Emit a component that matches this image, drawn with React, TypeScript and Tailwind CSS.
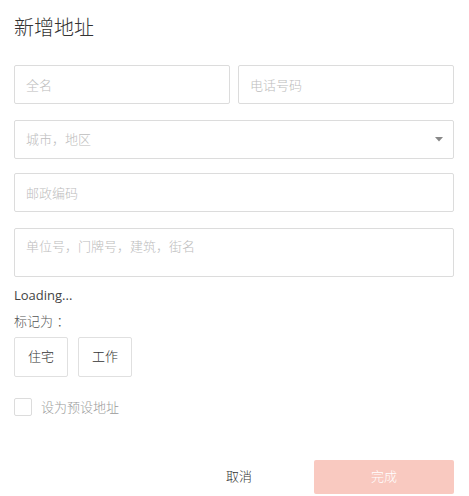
export default function App() {
  return (
    <div
      className="min-h-screen bg-white pl-[14px] pr-[15px] pt-[14px] text-[13px] font-light text-[#333]"
      style={{ fontFamily: '"Open Sans", "Noto Sans CJK SC", sans-serif' }}
    >
      {/* Title */}
      <h1 className="text-[20px] font-light leading-[28px] text-[#333]">新增地址</h1>

      {/* Name + phone */}
      <div className="mt-[23px] flex gap-[8px]">
        <input
          placeholder="全名"
          className="h-[39px] w-[216px] rounded-[2px] border border-[#dcdcdc] px-[11px] text-[13px] outline-none placeholder:text-[#bdbdbd]"
        />
        <input
          placeholder="电话号码"
          className="h-[39px] w-[216px] rounded-[2px] border border-[#dcdcdc] px-[11px] text-[13px] outline-none placeholder:text-[#bdbdbd]"
        />
      </div>

      {/* City select */}
      <div className="mt-4 flex h-[39px] w-[440px] items-center justify-between rounded-[2px] border border-[#dcdcdc] pl-[11px] pr-[10px]">
        <span className="text-[#bdbdbd]">城市，地区</span>
        <svg width="8" height="5" viewBox="0 0 8 5">
          <path d="M0 0h8L4 4.5z" fill="#888" />
        </svg>
      </div>

      {/* Postal */}
      <input
        placeholder="邮政编码"
        className="mt-[14px] block h-[39px] w-[440px] rounded-[2px] border border-[#dcdcdc] px-[11px] text-[13px] outline-none placeholder:text-[#bdbdbd]"
      />

      {/* Address */}
      <div className="mt-4 h-[49px] w-[440px] rounded-[2px] border border-[#dcdcdc] px-[11px] pt-[8px] leading-[18px] text-[#bdbdbd]">
        单位号，门牌号，建筑，街名
      </div>

      <div className="mt-[9px] font-normal leading-[18px] text-[#444]">Loading...</div>
      <div className="mt-2 leading-[18px] text-[#555]">标记为 ：</div>

      {/* Tags */}
      <div className="mt-[7px] flex gap-[10px]">
        <button className="h-[40px] w-[54px] rounded-[2px] border border-[#e0e0e0] text-[13px] text-[#333]">
          住宅
        </button>
        <button className="h-[40px] w-[54px] rounded-[2px] border border-[#e0e0e0] text-[13px] text-[#333]">
          工作
        </button>
      </div>

      {/* Default checkbox */}
      <label className="mt-[21px] flex items-center gap-[9px]">
        <span className="h-[18px] w-[18px] rounded-[2px] border border-[#dcdcdc]" />
        <span className="leading-[18px] text-[#999]">设为预设地址</span>
      </label>

      {/* Footer */}
      <div className="mt-[44px] flex justify-end gap-[5px]">
        <button className="h-[34px] w-[140px] text-[13px] text-[#333]">取消</button>
        <button className="h-[34px] w-[140px] rounded-[2px] bg-[#f9c9c0] text-[13px] text-white">
          完成
        </button>
      </div>
    </div>
  );
}
